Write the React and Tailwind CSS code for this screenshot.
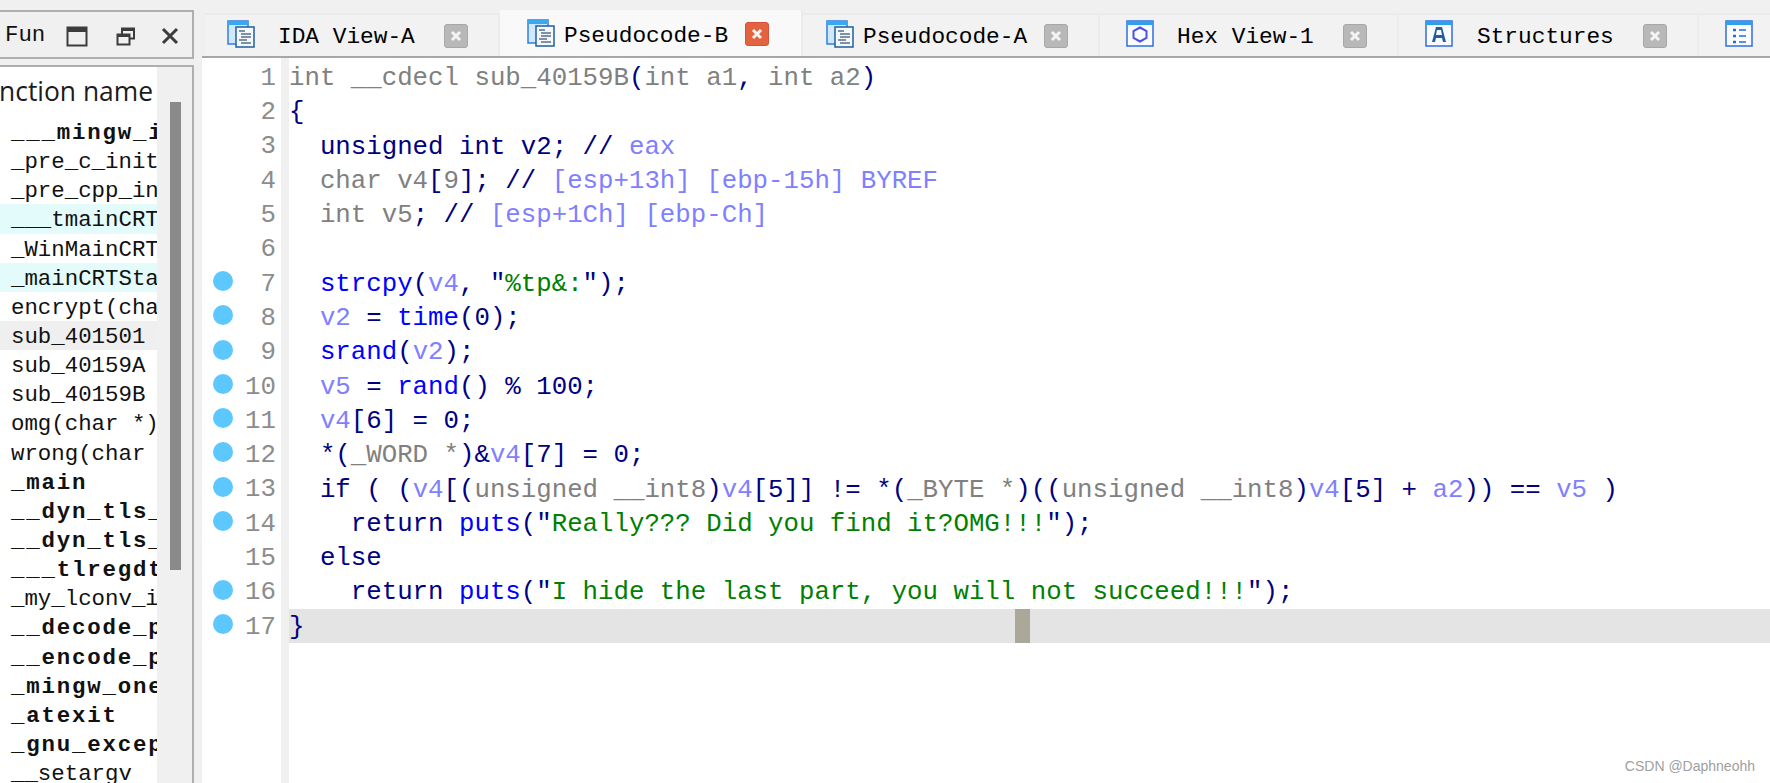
import React from 'react';

const FUNCTIONS = [
  { name: '___mingw_invalidParameterHandler', bold: true },
  { name: '_pre_c_init' },
  { name: '_pre_cpp_init' },
  { name: '___tmainCRTStartup', bg: 'bg-[#e4fbfb]' },
  { name: '_WinMainCRTStartup' },
  { name: '_mainCRTStartup', bg: 'bg-[#e4fbfb]' },
  { name: 'encrypt(char *,int)' },
  { name: 'sub_401501', bg: 'bg-[#efefef]' },
  { name: 'sub_40159A' },
  { name: 'sub_40159B' },
  { name: 'omg(char *)' },
  { name: 'wrong(char *)' },
  { name: '_main', bold: true },
  { name: '__dyn_tls_dtor@12', bold: true },
  { name: '__dyn_tls_init@12', bold: true },
  { name: '___tlregdtor', bold: true },
  { name: '_my_lconv_init' },
  { name: '__decode_pointer', bold: true },
  { name: '__encode_pointer', bold: true },
  { name: '_mingw_onexit', bold: true },
  { name: '_atexit', bold: true },
  { name: '_gnu_exception_handler', bold: true },
  { name: '__setargv' },
];

// n = navy, g = gray, v = variable, f = function, s = string
const COLORS = {
  n: 'text-[#000080]',
  g: 'text-[#808080]',
  v: 'text-[#8080ff]',
  f: 'text-[#0000ff]',
  s: 'text-[#008000]',
};

const CODE = [
  { dot: false, parts: [['g', 'int __cdecl sub_40159B'], ['n', '('], ['g', 'int a1'], ['n', ', '], ['g', 'int a2'], ['n', ')']] },
  { dot: false, parts: [['n', '{']] },
  { dot: false, parts: [['n', '  unsigned int v2; // '], ['v', 'eax']] },
  { dot: false, parts: [['g', '  char v4'], ['n', '['], ['g', '9'], ['n', ']; // '], ['v', '[esp+13h] [ebp-15h] BYREF']] },
  { dot: false, parts: [['g', '  int v5'], ['n', '; // '], ['v', '[esp+1Ch] [ebp-Ch]']] },
  { dot: false, parts: [] },
  { dot: true, parts: [['f', '  strcpy'], ['n', '('], ['v', 'v4'], ['n', ', "'], ['s', '%tp&:'], ['n', '");']] },
  { dot: true, parts: [['v', '  v2'], ['n', ' = '], ['f', 'time'], ['n', '(0);']] },
  { dot: true, parts: [['f', '  srand'], ['n', '('], ['v', 'v2'], ['n', ');']] },
  { dot: true, parts: [['v', '  v5'], ['n', ' = '], ['f', 'rand'], ['n', '() % 100;']] },
  { dot: true, parts: [['v', '  v4'], ['n', '[6] = 0;']] },
  { dot: true, parts: [['n', '  *('], ['g', '_WORD *'], ['n', ')&'], ['v', 'v4'], ['n', '[7] = 0;']] },
  { dot: true, parts: [['n', '  if ( ('], ['v', 'v4'], ['n', '[('], ['g', 'unsigned __int8'], ['n', ')'], ['v', 'v4'], ['n', '[5]] != *('], ['g', '_BYTE *'], ['n', ')(('], ['g', 'unsigned __int8'], ['n', ')'], ['v', 'v4'], ['n', '[5] + '], ['v', 'a2'], ['n', ')) == '], ['v', 'v5'], ['n', ' )']] },
  { dot: true, parts: [['n', '    return '], ['f', 'puts'], ['n', '("'], ['s', 'Really??? Did you find it?OMG!!!'], ['n', '");']] },
  { dot: false, parts: [['n', '  else']] },
  { dot: true, parts: [['n', '    return '], ['f', 'puts'], ['n', '("'], ['s', 'I hide the last part, you will not succeed!!!'], ['n', '");']] },
  { dot: true, parts: [['n', '}']] },
];

const DocIcon = () => (
  <svg width="29" height="28" viewBox="0 0 29 28">
    <rect x="1" y="1" width="20" height="23" fill="#cfe8fb" stroke="#2f7fe0" strokeWidth="1.5" />
    <rect x="1" y="1" width="20" height="4" fill="#38a8f0" />
    <rect x="9" y="7" width="18" height="20" fill="#f4f8fc" stroke="#1f5f9f" strokeWidth="1.5" />
    <path d="M12 11h6M14 14h10M14 17h10M12 20h8M14 23h10" stroke="#5a6f85" strokeWidth="1.3" />
  </svg>
);

const WindowIcon = ({ children }) => (
  <svg width="28" height="27" viewBox="0 0 28 27">
    <rect x="1" y="1" width="26" height="25" fill="#fafcff" stroke="#2f6fe0" strokeWidth="1.5" />
    <rect x="1" y="1" width="26" height="4" fill="#2f9fe8" />
    {children}
  </svg>
);

const HexIcon = () => (
  <WindowIcon>
    <path d="M14 7.5l6.5 3.5v7l-6.5 3.5-6.5-3.5v-7z" fill="none" stroke="#4a50e8" strokeWidth="2" />
  </WindowIcon>
);

const StructIcon = () => (
  <WindowIcon>
    <path d="M11 7h6l4 15h-3l-1-4h-6l-1 4H7zM12 10l-1 5h6l-1-5z" fill="#1f5f9f" fillRule="evenodd" />
  </WindowIcon>
);

const ListIcon = () => (
  <WindowIcon>
    <path d="M8 10h3M8 16h3M8 22h3" stroke="#1c6fe0" strokeWidth="2.5" />
    <path d="M14 10h7M14 16h7M14 22h7" stroke="#1c6fe0" strokeWidth="1.5" />
  </WindowIcon>
);

const CloseBox = ({ active }) => (
  <div className={`w-6 h-6 rounded-[3px] border flex items-center justify-center ${active ? 'bg-[#e4633f] border-[#d9503a]' : 'bg-[#b8b8b8] border-[#a8a8a8]'}`}>
    <svg width="14" height="14" viewBox="0 0 14 14">
      <path d="M3 3l8 8M11 3l-8 8" stroke="#f4f4f4" strokeWidth="3" />
    </svg>
  </div>
);

const Tab = ({ label, icon, active, widthClass, padClass, gapClass }) => (
  <div
    className={`${widthClass} ${padClass} shrink-0 flex items-center border-r-2 border-[#ebebeb] ${
      active ? 'h-[47px] bg-[#f9f9f9]' : 'h-[43px] bg-[#f2f2f2] border-t-2 border-t-[#ebebeb]'
    }`}
  >
    <div className={active ? 'flex' : 'flex -mt-[4px]'}>{icon}</div>
    <span className={`${gapClass} ${active ? 'mt-[7px]' : 'mt-[4px]'} text-[22.8px] text-black whitespace-nowrap font-['Liberation_Mono',monospace]`}>{label}</span>
    {label && <div className={active ? 'ml-auto mr-[32px] mt-[2px]' : 'ml-auto mr-[30px]'}><CloseBox active={active} /></div>}
  </div>
);

const Sidebar = () => (
  <aside className="w-[194px] shrink-0 flex flex-col bg-[#f0f0f0] min-h-0">
    <div className="mt-[10px] h-[49px] shrink-0 border-2 border-l-0 border-[#adb0b3] flex items-center pl-[5px] pt-[3px] font-['Liberation_Mono',monospace] text-[22.4px] text-[#111]">
      <span>Fun</span>
      <svg className="ml-[21px]" width="22" height="21" viewBox="0 0 22 21">
        <rect x="1.5" y="1.5" width="19" height="18" fill="none" stroke="#3c3c3c" strokeWidth="2" />
        <rect x="1" y="1" width="20" height="5" fill="#3c3c3c" />
      </svg>
      <svg className="ml-[28px]" width="20" height="19" viewBox="0 0 20 19">
        <rect x="6" y="1.5" width="12" height="10" fill="none" stroke="#3c3c3c" strokeWidth="2" />
        <rect x="6" y="1" width="12" height="3" fill="#3c3c3c" />
        <rect x="1.5" y="7.5" width="12" height="10" fill="#f0f0f0" stroke="#3c3c3c" strokeWidth="2" />
        <rect x="1" y="7" width="13" height="3" fill="#3c3c3c" />
      </svg>
      <svg className="ml-[25px]" width="18" height="18" viewBox="0 0 18 18">
        <path d="M2 2l14 14M16 2L2 16" stroke="#3c3c3c" strokeWidth="3" />
      </svg>
    </div>

    <div className="mt-[6px] flex-1 min-h-0 border-t-2 border-r-2 border-[#adb0b3] flex overflow-hidden">
      <div className="w-[157px] shrink-0 bg-white overflow-hidden">
        <div className="h-[50px] flex items-center justify-end pr-[4px] overflow-hidden whitespace-nowrap text-[26.4px] text-[#1c1c1c] font-['Open_Sans',sans-serif]">
          Function name
        </div>
        <div className="font-['Liberation_Mono',monospace] text-[22.4px] text-[#111]">
          {FUNCTIONS.map((fn, i) => (
            <div key={i} className={`h-[29.15px] leading-[33px] pl-[11px] whitespace-nowrap overflow-hidden ${fn.bold ? 'font-bold tracking-[1.8px]' : ''} ${fn.bg || ''}`}>
              {fn.name}
            </div>
          ))}
        </div>
      </div>
      <div className="flex-1 bg-[#f0f0f0] pl-[13px] pt-[35px]">
        <div className="w-[11px] h-[468px] bg-[#8a8a8a]"></div>
      </div>
    </div>
  </aside>
);

const CodeView = () => (
  <div className="relative flex-1 min-h-0 flex bg-white font-['Liberation_Mono',monospace] text-[25.75px] overflow-hidden">
    <div className="w-[79px] shrink-0 pt-[2px]">
      {CODE.map((line, i) => (
        <div key={i} className="h-[34.3px] flex items-center justify-end pr-[5px] text-[#8c8c8c]">
          {line.dot && <div className="w-5 h-5 rounded-full bg-[#5cc8ff] mr-auto ml-[11px] -mt-[4px]"></div>}
          <span className="mt-[4px]">{i + 1}</span>
        </div>
      ))}
    </div>
    <div className="w-2 shrink-0 bg-[#f0f0f0]"></div>
    <div className="flex-1 pt-[2px]">
      {CODE.map((line, i) => (
        <div key={i} className={`relative h-[34.3px] leading-[38px] whitespace-pre ${i === 16 ? 'bg-[#e4e4e4]' : ''}`}>
          {line.parts.map(([c, text], j) => (
            <span key={j} className={COLORS[c]}>{text}</span>
          ))}
          {i === 16 && <div className="absolute top-0 bottom-0 left-[726px] w-[15px] bg-[#aca899]"></div>}
        </div>
      ))}
    </div>
  </div>
);

export default function App() {
  return (
    <div className="relative w-[1770px] h-[783px] flex bg-[#f0f0f0] overflow-hidden">
      <Sidebar />
      <main className="flex-1 min-w-0 pl-2 flex flex-col">
        <div className="mt-[10px] h-[48px] shrink-0 flex items-end border-b-2 border-[#a6a6a6] pl-[3px] overflow-hidden">
          <Tab label="IDA View-A" icon={<DocIcon />} widthClass="w-[295px]" padClass="pl-[22px]" gapClass="ml-[22px]" />
          <Tab label="Pseudocode-B" icon={<DocIcon />} active widthClass="w-[303px]" padClass="pl-[27px]" gapClass="ml-[8px]" />
          <Tab label="Pseudocode-A" icon={<DocIcon />} widthClass="w-[297px]" padClass="pl-[23px]" gapClass="ml-[8px]" />
          <Tab label="Hex View-1" icon={<HexIcon />} widthClass="w-[299px]" padClass="pl-[26px]" gapClass="ml-[23px]" />
          <Tab label="Structures" icon={<StructIcon />} widthClass="w-[300px]" padClass="pl-[26px]" gapClass="ml-[24px]" />
          <Tab label="" icon={<ListIcon />} widthClass="w-[80px]" padClass="pl-[26px]" gapClass="" />
        </div>
        <CodeView />
      </main>
      <div className="absolute right-[15px] top-[757px] text-[14px] leading-[18px] text-[#a0a0a0] font-['Liberation_Sans',sans-serif]">
        CSDN @Daphneohh
      </div>
    </div>
  );
}
